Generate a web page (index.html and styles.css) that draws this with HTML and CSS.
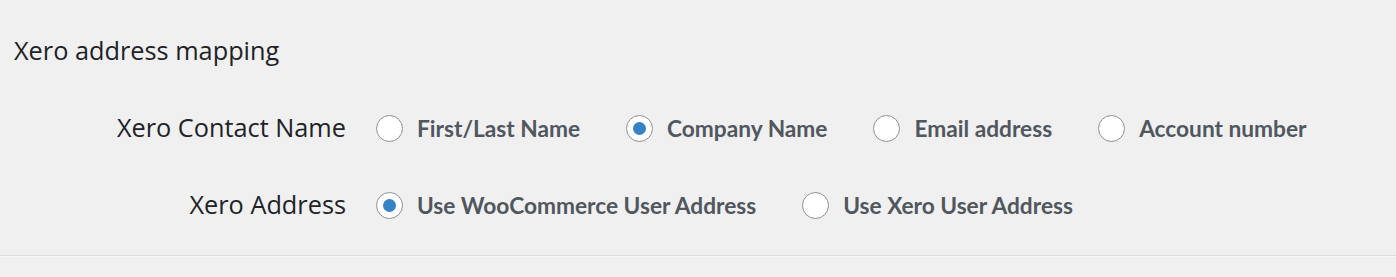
FILE: index.html
```html
<!DOCTYPE html>
<html lang="en">
<head>
    <meta charset="UTF-8" />
    <title>Xero address mapping</title>
    <link rel="stylesheet" href="styles.css">
</head>
<body>
    <section class="mapping">
        <h2 class="mapping-title">Xero address mapping</h2>

        <div class="mapping-rows">
            <div class="mapping-row">
                <div class="mapping-label">Xero Contact Name</div>
                <div class="mapping-options">
                    <label class="option"><input type="radio" name="contact_name" value="name"><span class="radio"></span>First/Last Name</label>
                    <label class="option"><input type="radio" name="contact_name" value="company" checked><span class="radio"></span>Company Name</label>
                    <label class="option"><input type="radio" name="contact_name" value="email"><span class="radio"></span>Email address</label>
                    <label class="option"><input type="radio" name="contact_name" value="account"><span class="radio"></span>Account number</label>
                </div>
            </div>

            <div class="mapping-row">
                <div class="mapping-label">Xero Address</div>
                <div class="mapping-options">
                    <label class="option"><input type="radio" name="address" value="woo" checked><span class="radio"></span>Use WooCommerce User Address</label>
                    <label class="option"><input type="radio" name="address" value="xero"><span class="radio"></span>Use Xero User Address</label>
                </div>
            </div>
        </div>

        <hr class="divider">
    </section>
</body>
</html>
```

FILE: styles.css
```css
body {
    margin: 0;
    background: #f0f0f0;
    font-family: "Open Sans", sans-serif;
    color: #1d2327;
}

.mapping {
    padding-top: 32px;
}

.mapping-title {
    margin: 0 0 0 14px;
    font-size: 25.3px;
    font-weight: 500;
    line-height: 36px;
}

.mapping-rows {
    padding-top: 22px;
    padding-bottom: 11px;
}

.mapping-row {
    display: grid;
    grid-template-columns: 346px 1fr;
    column-gap: 30px;
    align-items: center;
    height: 77px;
}

.mapping-label {
    text-align: right;
    font-size: 25.3px;
    font-weight: 500;
    margin-top: -4px;
}

.mapping-options {
    display: flex;
    gap: 46px;
}

.option {
    display: flex;
    align-items: center;
    gap: 14px;
    font-family: "Lato", sans-serif;
    font-size: 22.7px;
    font-weight: 700;
    color: #50575e;
    cursor: pointer;
}

.option input {
    display: none;
}

.radio {
    width: 25px;
    height: 25px;
    border: 1px solid #8c8f94;
    border-radius: 50%;
    background: #fff;
    display: flex;
    align-items: center;
    justify-content: center;
}

.option input:checked + .radio::after {
    content: "";
    width: 13px;
    height: 13px;
    border-radius: 50%;
    background: #3582c4;
}

.divider {
    margin: 0;
    border: 0;
    border-top: 1px solid #dcdcde;
    border-bottom: 1px solid #f6f7f7;
}
```
